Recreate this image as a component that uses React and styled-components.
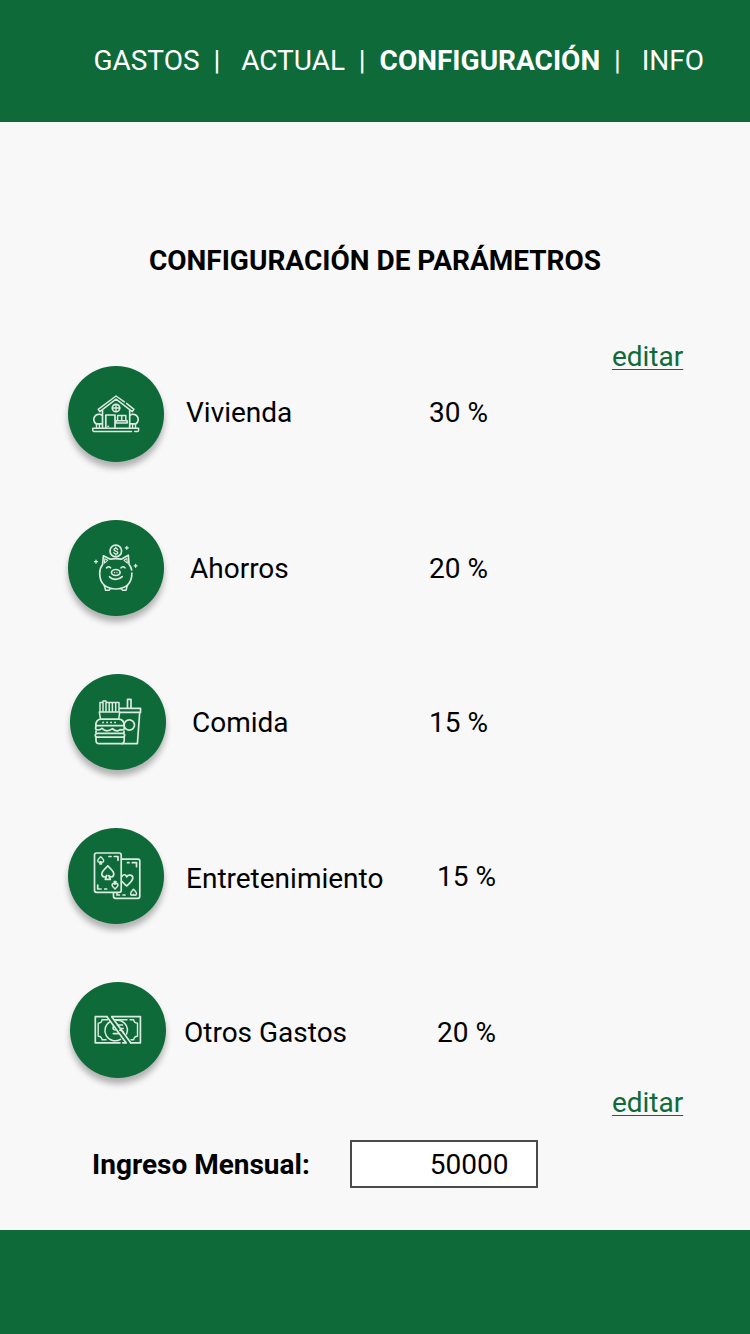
import React from "react";
import styled, { createGlobalStyle } from "styled-components";

const GREEN = "#0e6a38";

const GlobalStyle = createGlobalStyle`
  * { box-sizing: border-box; }
  body { margin: 0; background: #f8f8f8; }
`;

const Screen = styled.div`
  width: 750px;
  height: 1334px;
  display: flex;
  flex-direction: column;
  background: #f8f8f8;
  color: #000;
  font: 400 28px/33px Roboto, sans-serif;
  overflow: hidden;
`;

const Header = styled.header`
  height: 122px;
  flex: none;
  padding: 44px 0 0 93.4px;
  background: ${GREEN};
  color: #fff;
`;

const Nav = styled.nav`
  white-space: pre;
`;

const Main = styled.main`
  flex: 1;
  display: flex;
  flex-direction: column;
`;

const Title = styled.h1`
  margin: 122px 0 0;
  font-size: 28px;
  font-weight: 700;
  line-height: 33px;
  text-align: center;
`;

const EditLink = styled.a`
  align-self: flex-end;
  margin: ${(p) => p.$top}px 66.8px 0 0;
  color: ${GREEN};
  text-decoration: underline;
  text-decoration-thickness: 1.4px;
  text-underline-offset: 3px;
`;

const List = styled.ul`
  list-style: none;
  margin: -7px 0 0;
  padding: 0;
  display: flex;
  flex-direction: column;
  gap: 58px;
`;

const Row = styled.li`
  display: flex;
  align-items: flex-start;
  height: 96px;
  padding-left: ${(p) => p.$indent}px;
`;

const Disc = styled.div`
  width: 95.5px;
  height: 95.5px;
  margin-right: 0.5px;
  flex: none;
  border-radius: 50%;
  background: ${GREEN};
  box-shadow: 0 6px 6px rgba(0, 0, 0, 0.29);
`;

const Label = styled.span`
  width: ${(p) => p.$width}px;
  margin: ${(p) => p.$top}px 0 0 ${(p) => p.$gap}px;
  white-space: nowrap;
`;

const Value = styled.span`
  margin-top: ${(p) => p.$top}px;
`;

const Income = styled.div`
  display: flex;
  align-items: center;
  height: 48px;
  margin-top: 21px;
  padding-left: 92px;
`;

const IncomeLabel = styled.label`
  width: 258px;
  font-weight: 700;
`;

const Amount = styled.div`
  width: 188px;
  height: 48px;
  padding: 6px 27.6px 0 0;
  border: 2px solid #4b4b4b;
  background: #fff;
  text-align: right;
`;

const Footer = styled.footer`
  flex: none;
  height: 104px;
  background: ${GREEN};
`;

const Glyph = styled.svg`
  display: block;
  width: 96px;
  height: 96px;
  fill: none;
  stroke: #dcebe1;
  stroke-width: 1.7;
  stroke-linecap: round;
  stroke-linejoin: round;
`;

const House = () => (
  <Glyph viewBox="0 0 96 96">
    <path d="M58.5 37.3 66 43.4 64.3 45.6 48 33.2 31.8 45.6 30.2 43.4 48 30 56.3 35.9" strokeWidth="1.5" />
    <path d="M34.5 44.5V62M61.7 44.5V62M37.8 62V49H47V62M40 60.3h.2" />
    <circle cx="48" cy="42" r="3.7" />
    <path d="M48 38.3v7.4M44.3 42h7.4" strokeWidth="1.3" />
    <path d="M49.6 54.5V49.5H57.8V54.5M53.7 49.5V54.5M48 54.8H59.2V57.1H48Z" strokeWidth="1.5" />
    <path d="M34 49.2A4.8 4.8 0 1 0 28 57.8H34M62 49.2A4.8 4.8 0 1 1 68 57.8H62" />
    <path d="M28.5 58V62M31.4 58V62M64.6 58V62M67.5 58V62" strokeWidth="1.4" />
    <path d="M63.5 65.4H25.6Q24.8 65.4 24.8 64V62.3H70.6V64Q70.6 65.4 69.8 65.4H66.7" strokeWidth="1.5" />
  </Glyph>
);

const Piggy = () => (
  <Glyph viewBox="0 0 96 96">
    <circle cx="47.8" cy="31" r="5.8" />
    <path d="M49.7 29.5C49.2 28 46 28 46 29.7C46 31.4 49.8 30.8 49.8 32.6C49.8 34.4 46.3 34.3 45.8 32.6M47.8 27.3V28.3M47.8 34V35" strokeWidth="1.4" />
    <path d="M42.3 39.2 35.4 35.8 34.6 44.5Q31.7 48 31.7 53.5Q31.7 61 36.4 65.4M63.9 53Q63.9 61 59.3 65.4M63.7 50Q63 46.7 61.1 44.5L60.3 35.2 53.3 39.2Q47.8 38 42.3 39.2" />
    <path d="M36.4 65.4Q41.5 69 47.8 69T59.3 65.4M36.2 65.4 37.6 70.2H41.2L42.4 68.4M59.4 65.4 58 70.2H54.4L53.2 68.4" strokeWidth="1.5" />
    <path d="M36.8 38.8 39.7 40.3 36.4 43.2ZM58.8 38.5 56 40.3 59.4 43.2Z" strokeWidth="1.1" />
    <path d="M38.7 47.8Q40.7 45.7 42.5 47.8M53.1 47.8Q55 45.7 56.9 47.8" />
    <ellipse cx="47.8" cy="52.5" rx="4.3" ry="3" />
    <path d="M46.6 52.4v.3M49 52.4v.3" strokeWidth="1.2" />
    <path d="M41.5 56.7Q43.8 59.3 47.8 59.3T54.2 56.7" />
    <path d="M28 40.2v3M26.5 41.7h3M58.8 26.3v3M57.3 27.8h3M67.6 44.3v3M66.1 45.8h3" strokeWidth="1.3" />
  </Glyph>
);

const Food = () => (
  <Glyph viewBox="0 0 96 96">
    <path d="M30 38V28.5H33V38M33 28.5V27H36V38M36 28.5H49V38M39.2 28.5V38M42.4 28.5V38M45.7 28.5V38M29.3 38H49.7L48.8 45M29.3 38 30.5 45" strokeWidth="1.5" />
    <path d="M57.5 34V25.3H61V34M49.8 34.3H70.5V38.4H49.8M69.7 38.4 67.4 69.7H52" />
    <circle cx="59.3" cy="51" r="5.2" />
    <path d="M25.8 51.7Q25.6 45.2 31.5 45.2H48.2Q54.2 45.2 54.2 51.7ZM33 48.4h.2M37 48.4h.2M41 48.4h.2M45 48.4h.2" />
    <path d="M26 52.3Q24.5 55.8 28 56Q30.5 56 32 54.3Q34.5 56.8 37 56.8T42.5 54.6Q45 57.3 48 56.8L50.5 55.6Q55 57 54.2 52.3" />
    <path d="M28 59.3H52.5Q54.6 59.3 54.6 61.2T52.5 63.2H27.7Q25.3 63.2 25.3 61.2T28 59.3M26 57V59M54 57V59M26 63.4V66.2Q26 69.7 29.2 69.7H51Q54.2 69.7 54.2 66.2V63.4" />
  </Glyph>
);

const Cards = () => (
  <Glyph viewBox="0 0 96 96">
    <path d="M53.7 31.2H70Q71.8 31.2 71.8 33.2V68.3Q71.8 70.3 70 70.3H47.5Q45.5 70.3 45.5 68.3V64.8" />
    <rect x="26.5" y="25" width="26.7" height="39.3" rx="2" />
    <path d="M39.8 37.8C38 40.2 33.8 42.8 33.8 46C33.8 49.2 37.4 50 38.8 47.5L37.3 51.4H42.3L40.8 47.5C42.2 50 45.8 49.2 45.8 46C45.8 42.8 41.6 40.2 39.8 37.8Z" />
    <path d="M32.7 28.7C31.6 30.2 29.7 31 29.7 32.7C29.7 34.4 31.7 34.6 32.4 33.6L31.8 36H33.6L33 33.6C33.7 34.6 35.7 34.4 35.7 32.7C35.7 31 33.8 30.2 32.7 28.7Z" strokeWidth="1.4" />
    <path d="M47 61C45.9 59.4 44.1 58.6 44.1 56.9C44.1 55.2 46.1 55.1 46.8 56.1L46.2 53.6H48L47.4 56.1C48.1 55.1 50 55.2 50 56.9C50 58.6 48.1 59.4 47 61Z" strokeWidth="1.5" />
    <path d="M41 28.5H43M46.3 28.5H50V32.3M29.7 57V61H33M36.7 61H38.7" />
    <path d="M53.8 48.5C56 45.5 58.2 46.8 58.7 49C60 46.1 65.2 46.5 64.8 50.2C64.5 53.3 60.8 55.8 58.7 58C57.2 56.5 55.2 55 53.8 53.3" />
    <path d="M65.5 61.3C63.9 63.1 62.4 64 62.6 65.8C62.8 67.6 64.8 67.7 65.5 66.4C66.2 67.7 68.3 67.6 68.5 65.8C68.7 64 67.1 63.1 65.5 61.3Z" strokeWidth="1.5" />
    <path d="M59.5 34.7H61M64.3 34.7H68.5V38.7M49 64.7V67H51.4M55 67H57" />
  </Glyph>
);

const Money = () => (
  <Glyph viewBox="0 0 96 96">
    <path d="M37 34.7H25.3V60.8H50M41.8 34.7H70.4V60.8H60.7M52.8 60.8H56" />
    <path d="M37.5 37.7H32Q31.8 41 28.2 41.2V54.2Q31.8 54.4 32 57.7H36M44.2 37.7H57M60 37.7H63.7Q63.9 41 67.5 41.2V54.2Q63.9 54.4 63.7 57.7H61" strokeWidth="1.4" />
    <path d="M39.8 39.8A10 10 0 0 0 50.5 57.3M46.5 38.2A10 10 0 0 1 56.6 52" strokeWidth="1.5" />
    <path d="M52.5 43H47.5M51.2 46.5H53.2M43.5 44.3Q42 47.8 45.2 48M43.3 51.6H48.5M49.8 48.3Q53.8 48.5 53.3 51" strokeWidth="1.6" />
    <path d="M37 34.7 56 60.8M41.8 34.7 60.7 60.8" />
  </Glyph>
);

const categories = [
  { name: "Vivienda", share: "30 %", Icon: House, indent: 68, gap: 22, width: 243, top: 30, valueTop: 30 },
  { name: "Ahorros", share: "20 %", Icon: Piggy, indent: 68, gap: 26, width: 239, top: 32, valueTop: 32 },
  { name: "Comida", share: "15 %", Icon: Food, indent: 70, gap: 26, width: 237, top: 32, valueTop: 32 },
  { name: "Entretenimiento", share: "15 %", Icon: Cards, indent: 68, gap: 22, width: 251, top: 34, valueTop: 32 },
  { name: "Otros Gastos", share: "20 %", Icon: Money, indent: 70, gap: 18, width: 253, top: 34, valueTop: 34 },
];

export default function App() {
  return (
    <>
      <GlobalStyle />
      <Screen>
        <Header>
          <Nav>
            {"GASTOS  |   ACTUAL  |  "}
            <b>CONFIGURACIÓN</b>
            {"  |   INFO"}
          </Nav>
        </Header>
        <Main>
          <Title>CONFIGURACIÓN DE PARÁMETROS</Title>
          <EditLink $top={63}>editar</EditLink>
          <List>
            {categories.map(({ name, share, Icon, indent, gap, width, top, valueTop }) => (
              <Row key={name} $indent={indent}>
                <Disc>
                  <Icon />
                </Disc>
                <Label $gap={gap} $width={width} $top={top}>{name}</Label>
                <Value $top={valueTop}>{share}</Value>
              </Row>
            ))}
          </List>
          <EditLink $top={8}>editar</EditLink>
          <Income>
            <IncomeLabel>Ingreso Mensual:</IncomeLabel>
            <Amount>50000</Amount>
          </Income>
        </Main>
        <Footer />
      </Screen>
    </>
  );
}
